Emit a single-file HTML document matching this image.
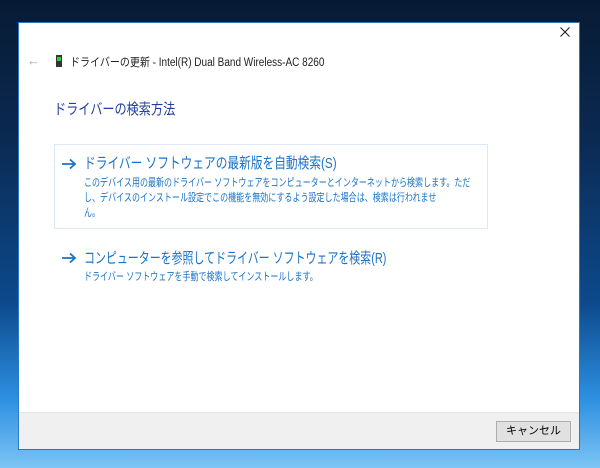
<!DOCTYPE html>
<html><head><meta charset="utf-8"><style>
*{margin:0;padding:0;box-sizing:border-box}
body{width:600px;height:468px;overflow:hidden;position:relative;font-family:"Liberation Sans","Noto Sans CJK JP",sans-serif;
background:linear-gradient(180deg,#071a33 0%,#0b2a52 30%,#0d4a8c 65%,#2d8fe0 85%,#7cc4f5 100%);}
.win{position:absolute;left:18px;top:22px;width:562px;height:428px;background:#fff;border:1px solid #2b78c5}
.foot{position:absolute;left:0;right:0;bottom:0;height:37px;background:#f0f0f0;border-top:1px solid #e6e6e6}
.btn{position:absolute;left:477px;top:8px;width:75px;height:21px;background:#e1e1e1;border:1px solid #adadad;font-size:11px;text-align:center;line-height:19px;color:#000}
.t{position:absolute;white-space:nowrap;transform-origin:0 0}
.s{transform:scaleX(0.73)}
.blue{color:#1a73c8}
</style></head><body>
<div class="win">
  <svg style="position:absolute;left:541px;top:4px" width="10" height="10"><path d="M0.5 0.5L9.5 9.5M9.5 0.5L0.5 9.5" stroke="#222" stroke-width="1.1"/></svg>
  <div class="t" style="left:8px;top:30px;font-size:13px;color:#aaa">←</div>
  <div style="position:absolute;left:37px;top:32px;width:6px;height:12px;background:#333"><div style="margin:2px 1px;width:4px;height:4px;background:#3c3"></div></div>
  <div class="t" style="left:51px;top:31px;font-size:11.5px;color:#222;transform:scaleX(0.87)">ドライバーの更新 - Intel(R) Dual Band Wireless-AC 8260</div>
  <div class="t" style="left:35px;top:75px;font-size:15px;color:#1f3f9c;transform:scaleX(0.81)">ドライバーの検索方法</div>
  <div style="position:absolute;left:35px;top:121px;width:434px;height:85px;border:1px solid #dbe8f6"></div>
  <svg style="position:absolute;left:42px;top:135px" width="16" height="12"><path d="M1 6H14M9 1.5L14 6L9 10.5" stroke="#1a73c8" stroke-width="1.8" fill="none"/></svg>
  <div class="t blue" style="left:65px;top:129px;font-size:15px;transform:scaleX(0.78)">ドライバー ソフトウェアの最新版を自動検索(S)</div>
  <div class="t blue s" style="left:65px;top:153px;font-size:11px;line-height:15px">このデバイス用の最新のドライバー ソフトウェアをコンピューターとインターネットから検索します。ただ<br>し、デバイスのインストール設定でこの機能を無効にするよう設定した場合は、検索は行われませ<br>ん。</div>
  <svg style="position:absolute;left:42px;top:229px" width="16" height="12"><path d="M1 6H14M9 1.5L14 6L9 10.5" stroke="#1a73c8" stroke-width="1.8" fill="none"/></svg>
  <div class="t blue s" style="left:65px;top:224px;font-size:15px">コンピューターを参照してドライバー ソフトウェアを検索(R)</div>
  <div class="t blue s" style="left:65px;top:245px;font-size:11px">ドライバー ソフトウェアを手動で検索してインストールします。</div>
  <div class="foot"><div class="btn">キャンセル</div></div>
</div>
</body></html>
